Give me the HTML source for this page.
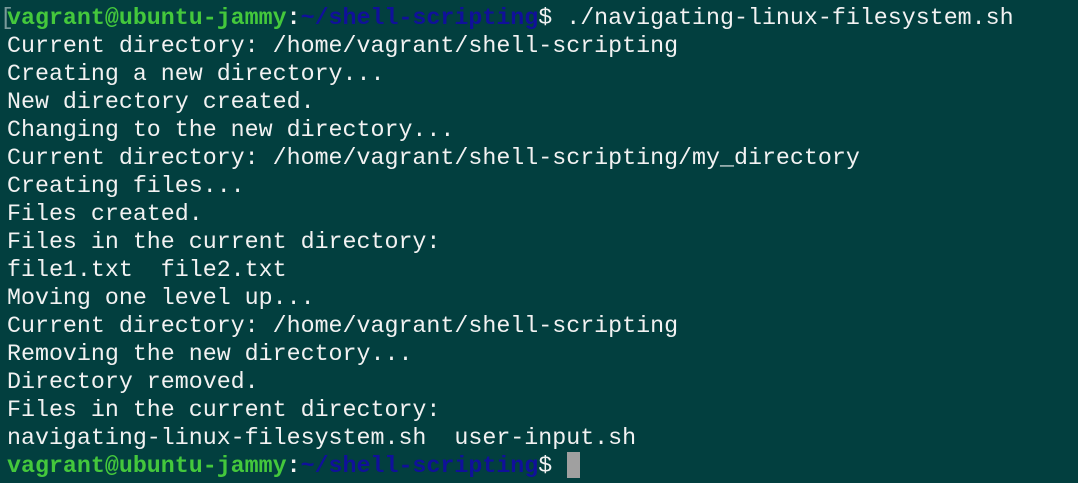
<html><head><style>
body{margin:0;width:1078px;height:483px;background:#023f3f;overflow:hidden}
pre{margin:0;position:absolute;left:7px;top:4px;font-family:"Liberation Mono",monospace;font-size:23.3px;line-height:28px;color:#f2f2f2}
.g{color:#44c83c;font-weight:bold}.b{color:#10109a;font-weight:bold}.w{font-weight:bold}
.br{position:absolute;left:0;top:4px;font-family:"Liberation Mono",monospace;font-size:23.3px;line-height:28px;color:#7a9a9a}
.cur{position:absolute;left:567px;top:452px;width:13px;height:26px;background:#a0a0a0}
</style></head><body>
<div class="br">[</div>
<pre><span class="g">vagrant@ubuntu-jammy</span><span class="w">:</span><span class="b">~/shell-scripting</span>$ ./navigating-linux-filesystem.sh
Current directory: /home/vagrant/shell-scripting
Creating a new directory...
New directory created.
Changing to the new directory...
Current directory: /home/vagrant/shell-scripting/my_directory
Creating files...
Files created.
Files in the current directory:
file1.txt  file2.txt
Moving one level up...
Current directory: /home/vagrant/shell-scripting
Removing the new directory...
Directory removed.
Files in the current directory:
navigating-linux-filesystem.sh  user-input.sh
<span class="g">vagrant@ubuntu-jammy</span><span class="w">:</span><span class="b">~/shell-scripting</span>$ </pre>
<div class="cur"></div>
</body></html>
